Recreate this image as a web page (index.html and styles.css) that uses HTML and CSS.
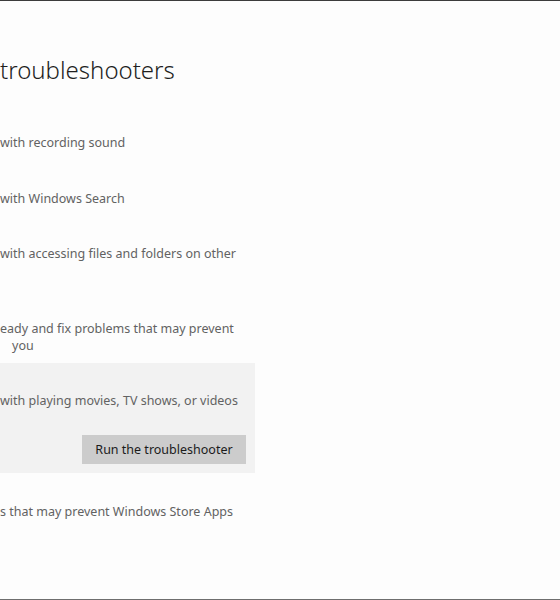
FILE: index.html
```html
<!DOCTYPE html>
<html lang="en">
<head>
  <meta charset="UTF-8" />
  <title>Additional troubleshooters</title>
  <link rel="stylesheet" href="styles.css">
</head>
<body>
  <div class="window">
    <main class="panel">
      <h1 class="title">troubleshooters</h1>

      <div class="item item-audio">
        <p>with recording sound</p>
      </div>

      <div class="item item-search">
        <p>with Windows Search</p>
      </div>

      <div class="item item-shared">
        <p>with accessing files and folders on other</p>
        <p>&nbsp;</p>
      </div>

      <div class="item item-speech">
        <p>eady and fix problems that may prevent</p>
        <p class="tail">you</p>
      </div>

      <div class="item item-video selected">
        <p>with playing movies, TV shows, or videos</p>
        <div class="actions">
          <button class="run">Run the troubleshooter</button>
        </div>
      </div>

      <div class="item item-store">
        <p>s that may prevent Windows Store Apps</p>
        <p>&nbsp;</p>
      </div>
    </main>
  </div>
</body>
</html>
```

FILE: styles.css
```css
html, body { margin:0; padding:0; background:#fff; }
body { font-family:"Noto Sans", "Open Sans", Arial, sans-serif; overflow:hidden; }

.window { height:600px; box-sizing:border-box; border-top:1px solid #3c3c3c; border-bottom:1px solid #6e6e6e; background:#fdfdfd; }
.panel { width:255px; display:flex; flex-direction:column; }

.title { margin:53px 0 0; font-size:24px; line-height:32px; font-weight:300; color:#1f1f1f; }

.item p { margin:0; font-size:12.5px; line-height:17px; color:#626262; white-space:nowrap; }
.item .tail { padding-left:12px; }

.item-audio { margin-top:48px; }
.item-search { margin-top:39px; }
.item-shared { margin-top:38px; }
.item-speech { margin-top:41px; }
.item-store { margin-top:30px; }

.selected { margin-top:9px; background:#f2f2f2; padding:29px 0 9px; }
.actions { display:flex; justify-content:flex-end; padding-right:9px; margin-top:26px; }
.run { width:164px; height:29px; border:none; background:#cccccc; color:#1b1b1b; font-family:inherit; font-size:12.5px; padding:0; cursor:pointer; }
```
